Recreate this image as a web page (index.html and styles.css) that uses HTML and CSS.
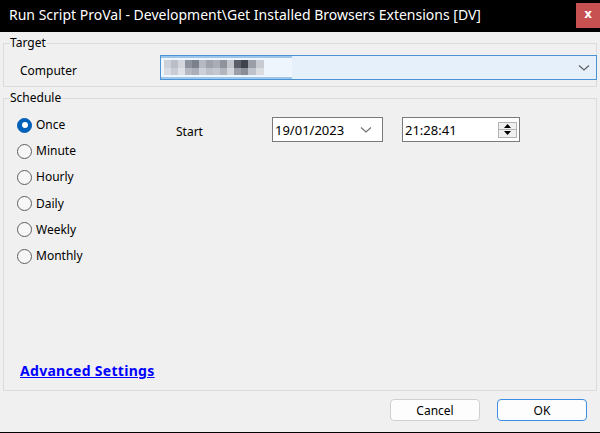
FILE: index.html
```html
<!DOCTYPE html>
<html>
<head>
<meta charset="utf-8">
<link rel="stylesheet" href="styles.css">
</head>
<body>
<div class="window">
  <div class="titlebar">
    <span class="title">Run Script ProVal - Development\Get Installed Browsers Extensions [DV]</span>
    <span class="close">x</span>
  </div>
  <fieldset class="group target">
    <legend>Target</legend>
    <div class="target-row">
      <span class="label computer-label">Computer</span>
      <div class="combo">
        <div class="selection"><div class="blur"><div class="blur-row top"></div><div class="blur-row bottom"></div></div></div>
        <svg class="chev" width="12" height="8" viewBox="0 0 12 8"><path d="M1 1.5 L6 6 L11 1.5" fill="none" stroke="#606060" stroke-width="1.2"/></svg>
      </div>
    </div>
  </fieldset>
  <fieldset class="group schedule">
    <legend>Schedule</legend>
    <div class="sched-body">
      <div class="sched-top">
        <div class="radios">
          <div class="radio-row"><span class="radio checked"></span><span class="rlabel">Once</span></div>
          <div class="radio-row"><span class="radio"></span><span class="rlabel">Minute</span></div>
          <div class="radio-row"><span class="radio"></span><span class="rlabel">Hourly</span></div>
          <div class="radio-row"><span class="radio"></span><span class="rlabel">Daily</span></div>
          <div class="radio-row"><span class="radio"></span><span class="rlabel">Weekly</span></div>
          <div class="radio-row"><span class="radio"></span><span class="rlabel">Monthly</span></div>
        </div>
        <div class="start">
          <span class="label start-label">Start</span>
          <div class="datebox">
            <span class="val">19/01/2023</span>
            <svg class="chev2" width="12" height="8" viewBox="0 0 12 8"><path d="M1 1.5 L6 6 L11 1.5" fill="none" stroke="#707070" stroke-width="1.2"/></svg>
          </div>
          <div class="timebox">
            <span class="val">21:28:41</span>
            <div class="spin">
              <div class="spin-btn"><svg width="7" height="4" viewBox="0 0 7 4"><path d="M0 4 L3.5 0 L7 4 Z" fill="#000"/></svg></div>
              <div class="spin-btn"><svg width="7" height="4" viewBox="0 0 7 4"><path d="M0 0 L3.5 4 L7 0 Z" fill="#000"/></svg></div>
            </div>
          </div>
        </div>
      </div>
      <a class="adv" href="#">Advanced Settings</a>
    </div>
  </fieldset>
  <div class="footer">
    <button class="btn">Cancel</button>
    <button class="btn ok">OK</button>
  </div>
</div>
</body>
</html>
```

FILE: styles.css
```css
* { box-sizing: border-box; }
html, body { margin: 0; padding: 0; }
body {
  width: 600px;
  height: 433px;
  background: #f0f0f0;
  font-family: "Noto Sans", "Open Sans", sans-serif;
  font-size: 12px;
  color: #000;
  overflow: hidden;
}
.window {
  width: 600px;
  height: 433px;
  display: flex;
  flex-direction: column;
  border-bottom: 1px solid #000;
}
.titlebar {
  height: 32px;
  background: #000;
  display: flex;
  align-items: flex-start;
  justify-content: space-between;
  flex-shrink: 0;
}
.title {
  color: #fff;
  font-size: 14px;
  line-height: 16px;
  margin: 7px 0 0 9px;
  white-space: nowrap;
}
.close {
  width: 24px;
  height: 25px;
  margin-top: 3px;
  background: #c75050;
  color: #fff;
  font-weight: bold;
  font-size: 12px;
  line-height: 23px;
  text-align: center;
  font-family: "DejaVu Sans", sans-serif;
}
.group {
  margin: 0 3px;
  border: 1px solid #dcdcdc;
  padding: 0;
  min-width: 0;
}
.group legend {
  padding: 0;
  margin-left: 6px;
  font-size: 12px;
  line-height: 16px;
  height: 16px;
}
.target { margin-top: 3px; }
.target-row {
  display: flex;
  align-items: center;
  padding: 4px 0 6px 16px;
}
.computer-label { width: 140px; margin-top: 5px; }
.combo {
  width: 437px;
  height: 25px;
  margin-right: -1px;
  border: 1px solid #4a94d6;
  background: #e5f0fa;
  position: relative;
  display: flex;
  align-items: center;
  justify-content: flex-end;
  padding-right: 6px;
}
.selection {
  position: absolute;
  left: 0;
  top: 0;
  width: 131px;
  height: 23px;
  background: #eef5fc;
  border-top: 2px solid #9ec6ea;
  border-bottom: 2px solid #9ec6ea;
}
.blur {
  position: absolute;
  left: 3px;
  top: 2px;
  width: 100px;
  height: 15px;
  display: flex;
  flex-direction: column;
}
.blur-row { flex: 1; }
.blur-row.top {
  background: linear-gradient(90deg,
    #cdd2da 0 7px, #b9bec8 7px 14px, #d3d6dc 14px 21px, #8d939e 21px 28px,
    #7a808c 28px 35px, #b5b9c1 35px 42px, #9ea2ab 42px 49px, #a9adb5 49px 56px,
    #8f939c 56px 63px, #c2c5cc 63px 70px, #5a5e68 70px 77px, #3f434c 77px 84px,
    #9a9ea7 84px 92px, #c8cbd1 92px 100px);
}
.blur-row.bottom {
  background: linear-gradient(90deg,
    #d9dce2 0 7px, #c8ccd4 7px 14px, #dfe1e6 14px 21px, #b4b8c1 21px 28px,
    #a9aeb8 28px 35px, #cdd0d6 35px 42px, #bdc1c8 42px 49px, #c4c7cd 49px 56px,
    #b3b6bd 56px 63px, #d5d7dc 63px 70px, #9b9ea6 70px 77px, #8b8e96 77px 84px,
    #bfc2c8 84px 92px, #dadce0 92px 100px);
}
.schedule {
  margin-top: 3px;
}
.sched-body {
  height: 284px;
  display: flex;
  flex-direction: column;
  justify-content: space-between;
  padding: 6px 0 11px 13px;
}
.sched-top {
  display: flex;
}
.radios {
  width: 159px;
  display: flex;
  flex-direction: column;
}
.radio-row {
  height: 26.2px;
  display: flex;
  align-items: center;
}
.radio {
  width: 15px;
  height: 15px;
  border-radius: 50%;
  border: 1px solid #5f5f5f;
  background: #f7f7f7;
  margin-right: 4px;
  flex-shrink: 0;
}
.radio.checked {
  background: #005fb8;
  border-color: #005fb8;
  position: relative;
}
.radio.checked::after {
  content: "";
  position: absolute;
  left: 3.5px;
  top: 3.5px;
  width: 6px;
  height: 6px;
  border-radius: 50%;
  background: #fff;
}
.rlabel { margin-top: -1px; }
.start {
  display: flex;
  align-items: center;
  height: 25px;
  margin-top: 5px;
}
.start-label { width: 96px; margin-top: 4px; }
.datebox, .timebox {
  height: 25px;
  border: 1px solid #7a7a7a;
  background: #fff;
  display: flex;
  align-items: center;
  justify-content: space-between;
  padding-left: 2px;
}
.datebox { width: 111px; padding-right: 10px; }
.timebox { width: 118px; margin-left: 19px; padding-right: 2px; }
.val { font-size: 13px; }
.spin {
  display: flex;
  flex-direction: column;
  width: 19px;
  height: 16px;
  border: 1px solid #b4b4b4;
  background: #f0f0f0;
}
.spin-btn {
  flex: 1;
  display: flex;
  align-items: center;
  justify-content: center;
}
.spin-btn:first-child { border-bottom: 1px solid #b4b4b4; }
.adv {
  color: #0000ff;
  font-weight: bold;
  font-size: 14px;
  line-height: 16px;
  letter-spacing: 0.3px;
  text-decoration: underline;
  margin-left: 3px;
  width: max-content;
}
.footer {
  flex: 1;
  display: flex;
  justify-content: flex-end;
  align-items: flex-start;
  padding: 8px 13px 0 0;
  gap: 17px;
}
.btn {
  width: 90px;
  height: 22px;
  background: #fdfdfd;
  border: 1px solid #d0d0d0;
  border-radius: 4px;
  font-family: "Noto Sans", "Open Sans", sans-serif;
  font-size: 12px;
  color: #000;
  padding: 0;
}
.btn.ok {
  border-color: #3d8ee0;
}
```
